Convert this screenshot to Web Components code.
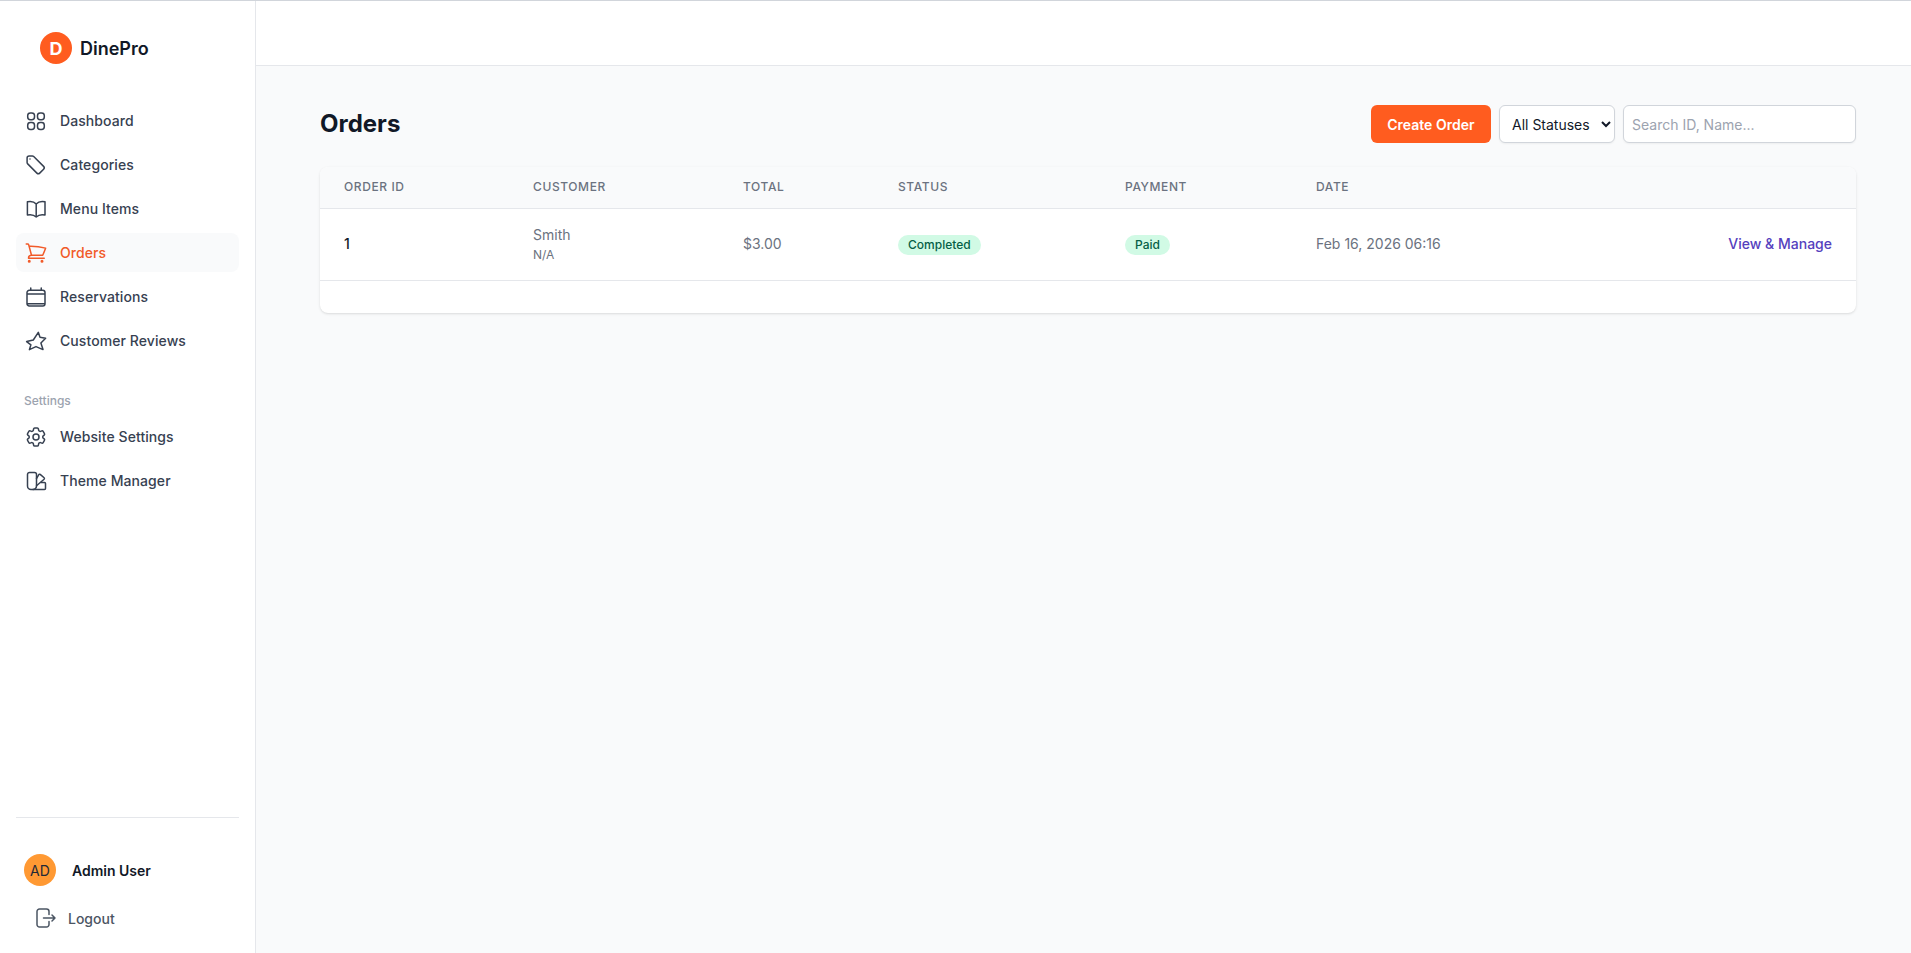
<!DOCTYPE html>
<html lang="en">
<head>
<meta charset="utf-8">
<title>Orders</title>
<style>
  html, body { margin: 0; height: 100%; }
  body { font-family: Inter, "Liberation Sans", sans-serif; background: #f9fafb; color: #111827; }
</style>
</head>
<body>
<app-shell>
  <side-bar slot="side"></side-bar>
  <orders-page></orders-page>
</app-shell>

<script>
const ICONS = {
  dashboard: '<rect x="3.7" y="3.9" width="6.8" height="6.8" rx="2.7"/><rect x="13.5" y="3.9" width="6.8" height="6.8" rx="2.7"/><rect x="3.7" y="13.6" width="6.8" height="6.8" rx="2.7"/><rect x="13.5" y="13.6" width="6.8" height="6.8" rx="2.7"/>',
  tag: '<path d="M5.2 2.9h3.1c.5 0 1 .2 1.4.6l9.9 9.9c.8.8.8 2 0 2.8l-3.9 3.9c-.8.8-2 .8-2.8 0l-9.2-9.2a2 2 0 0 1-.6-1.4V4.9c0-1.1.9-2 2.1-2Z"/><path d="M6 6h.01"/>',
  book: '<path d="M12.2 7C10.7 5.3 8.7 4.5 6.2 4.5c-1 0-2 .1-2.8.3V18c.8-.2 1.8-.3 2.8-.3 2.5 0 4.5.8 6 2.3M12.2 7c1.5-1.7 3.5-2.5 6-2.5 1 0 2 .1 2.8.3V18c-.8-.2-1.8-.3-2.8-.3-2.5 0-4.5.8-6 2.3M12.2 7v13"/>',
  cart: '<path d="M2.25 3h1.386c.51 0 .955.343 1.087.835l.383 1.437M7.5 14.25a3 3 0 0 0-3 3h15.75m-12.75-3h11.218c1.121-2.3 2.1-4.684 2.924-7.138a60.114 60.114 0 0 0-16.536-1.84M7.5 14.25 5.106 5.272M6 20.25a.75.75 0 1 1-1.5 0 .75.75 0 0 1 1.5 0Zm12.75 0a.75.75 0 1 1-1.5 0 .75.75 0 0 1 1.5 0Z"/>',
  calendar: '<path d="M6.75 3v2.25M17.25 3v2.25M3 18.75V7.5a2.25 2.25 0 0 1 2.25-2.25h13.5A2.25 2.25 0 0 1 21 7.5v11.25m-18 0A2.25 2.25 0 0 0 5.25 21h13.5A2.25 2.25 0 0 0 21 18.75m-18 0h18M3 9h18"/>',
  star: '<path d="M14.3 3.3 16 8.3l5.6 1-4.7 4.7 2.1 6.6-7-3-6.6 3 1.5-4.8-4.3-3.2 6.7-1.6Z"/>',
  cog: '<path d="M9.594 3.94c.09-.542.56-.94 1.11-.94h2.593c.55 0 1.02.398 1.11.94l.213 1.281c.063.374.313.686.645.87.074.04.147.083.22.127.325.196.72.257 1.075.124l1.217-.456a1.125 1.125 0 0 1 1.37.49l1.296 2.247a1.125 1.125 0 0 1-.26 1.431l-1.003.827c-.293.241-.438.613-.43.992a7.723 7.723 0 0 1 0 .255c-.008.378.137.75.43.991l1.004.827c.424.35.534.955.26 1.43l-1.298 2.247a1.125 1.125 0 0 1-1.369.491l-1.217-.456c-.355-.133-.75-.072-1.076.124a6.47 6.47 0 0 1-.22.128c-.331.183-.581.495-.644.869l-.213 1.281c-.09.543-.56.94-1.11.94h-2.594c-.55 0-1.019-.398-1.11-.94l-.213-1.281c-.062-.374-.312-.686-.644-.87a6.52 6.52 0 0 1-.22-.127c-.325-.196-.72-.257-1.076-.124l-1.217.456a1.125 1.125 0 0 1-1.369-.49l-1.297-2.247a1.125 1.125 0 0 1 .26-1.431l1.004-.827c.292-.24.437-.613.43-.991a6.932 6.932 0 0 1 0-.255c.007-.38-.138-.751-.43-.992l-1.004-.827a1.125 1.125 0 0 1-.26-1.43l1.297-2.247a1.125 1.125 0 0 1 1.37-.491l1.216.456c.356.133.751.072 1.076-.124.072-.044.146-.086.22-.128.332-.183.582-.495.644-.869l.214-1.28Z"/><path d="M15 12a3 3 0 1 1-6 0 3 3 0 0 1 6 0Z"/>',
  swatch: '<path d="M3.5 5.5a2 2 0 0 1 2-2h5a2 2 0 0 1 2 2V17a3.5 3.5 0 0 1-3.5 3.5H7A3.5 3.5 0 0 1 3.5 17Z"/><path d="m12.5 9.5 2.3-3.8a1 1 0 0 1 1.4-.3l3.9 3.4a1 1 0 0 1 0 1.4l-7.6 6.6"/><path d="M17 13.5h3.5a1 1 0 0 1 1 1v5a1 1 0 0 1-1 1H9"/>',
  logout: '<path d="M15 8.5v-3A2.5 2.5 0 0 0 12.5 3h-7A2.5 2.5 0 0 0 3 5.5v13A2.5 2.5 0 0 0 5.5 21h7a2.5 2.5 0 0 0 2.5-2.5v-3M9.5 12H21m-3-3 3 3-3 3"/>'
};

function icon(name) {
  return `<svg viewBox="0 0 24 24" fill="none" stroke="currentColor" stroke-width="1.5" stroke-linecap="round" stroke-linejoin="round" width="24" height="24">${ICONS[name]}</svg>`;
}

window.customElements.define('app-shell',
class extends HTMLElement {
  constructor(){super();
    this.attachShadow({mode:'open'});
    this.shadowRoot.innerHTML = `
    <style>
      :host { display:flex; height:953px; box-sizing:border-box; border-top:1px solid #d1d5db; overflow:hidden; }
      .main { flex:1; min-width:0; display:flex; flex-direction:column; }
      .top { height:64px; flex:none; background:#fff; border-bottom:1px solid #e5e7eb; }
    </style>
    <slot name="side"></slot>
    <div class="main">
      <div class="top"></div>
      <slot></slot>
    </div>
    `;
  }
});

window.customElements.define('nav-item',
class extends HTMLElement {
  constructor(){super();
    this.attachShadow({mode:'open'});
    this.shadowRoot.innerHTML = `
    <style>
      :host { display:flex; align-items:center; gap:12px; height:39px; padding:0 8px; border-radius:8px;
        font-size:14px; font-weight:500; letter-spacing:.08px; color:#374151; }
      :host([active]) { background:#f9fafb; color:#f15a29; }
      svg { flex:none; display:block; }
    </style>
    ${icon(this.getAttribute('icon'))}
    <slot></slot>
    `;
  }
});

window.customElements.define('side-bar',
class extends HTMLElement {
  constructor(){super();
    this.attachShadow({mode:'open'});
    this.shadowRoot.innerHTML = `
    <style>
      :host { display:flex; flex-direction:column; flex:none; width:256px; box-sizing:border-box;
        background:#fff; border-right:1px solid #e5e7eb; padding:0 16px; }
      .brand { display:flex; align-items:center; gap:8px; height:32px; margin:31px 0 0 24px;
        font-size:18px; font-weight:600; color:#111827; }
      .mark { width:32px; height:32px; border-radius:50%; background:#ff5c1f; color:#fff; font-weight:700; font-size:18px;
        display:flex; align-items:center; justify-content:center; }
      nav { display:flex; flex-direction:column; gap:5px; margin-top:37px; }
      .label { font-size:12px; font-weight:500; color:#9ca3af; padding-left:8px; margin:33px 0 8px; line-height:16px; }
      .foot { margin-top:auto; border-top:1px solid #e5e7eb; padding:36px 0 23px; }
      .user { display:flex; align-items:center; gap:16px; padding-left:8px; font-size:14px; font-weight:600; color:#111827; }
      .avatar { width:32px; height:32px; border-radius:50%; background:#ff9933; color:#1f2937; font-size:14px; font-weight:400;
        display:flex; align-items:center; justify-content:center; }
      .logout { display:flex; align-items:center; gap:10px; margin:20px 0 0 18px; height:24px; font-size:14px; font-weight:500; color:#4b5563; }
      .logout svg { display:block; }
    </style>
    <div class="brand"><div class="mark">D</div>DinePro</div>
    <nav>
      <nav-item icon="dashboard">Dashboard</nav-item>
      <nav-item icon="tag">Categories</nav-item>
      <nav-item icon="book">Menu Items</nav-item>
      <nav-item icon="cart" active>Orders</nav-item>
      <nav-item icon="calendar">Reservations</nav-item>
      <nav-item icon="star">Customer Reviews</nav-item>
    </nav>
    <div class="label">Settings</div>
    <nav style="margin-top:0">
      <nav-item icon="cog">Website Settings</nav-item>
      <nav-item icon="swatch">Theme Manager</nav-item>
    </nav>
    <div class="foot">
      <div class="user"><div class="avatar">AD</div>Admin User</div>
      <div class="logout">${icon('logout')}Logout</div>
    </div>
    `;
  }
});

window.customElements.define('status-badge',
class extends HTMLElement {
  constructor(){super();
    this.attachShadow({mode:'open'});
    this.shadowRoot.innerHTML = `
    <style>
      :host { display:inline-block; padding:2px 10px; border-radius:9999px; background:#d1fae5; color:#065f46;
        font-size:12px; line-height:16px; font-weight:500; }
    </style>
    <slot></slot>
    `;
  }
});

window.customElements.define('orders-table',
class extends HTMLElement {
  constructor(){super();
    this.attachShadow({mode:'open'});
    this.shadowRoot.innerHTML = `
    <style>
      :host { display:block; background:#fff; border-radius:8px; overflow:hidden;
        box-shadow:0 1px 3px rgba(0,0,0,.1), 0 1px 2px -1px rgba(0,0,0,.1); }
      table { width:100%; border-collapse:collapse; table-layout:fixed; }
      th { height:41px; padding:0 0 1px 24px; box-sizing:border-box; background:#f9fafb; border-bottom:1px solid #e5e7eb; text-align:left;
        font-size:12px; font-weight:500; letter-spacing:.05em; text-transform:uppercase; color:#6b7280; }
      td { height:72px; padding:0 0 1px 24px; box-sizing:border-box; border-bottom:1px solid #e5e7eb; font-size:14px; color:#6b7280; }
      td.id { color:#111827; font-weight:500; }
      td.pill { padding-top:2px; padding-bottom:0; }
      td.action { text-align:right; padding:0 24px 1px 0; }
      a { color:#5540bd; font-weight:500; text-decoration:none; }
      .sub { font-size:12px; line-height:16px; margin-top:2px; }
      .name { line-height:20px; }
      .pager { height:32px; }
    </style>
    <table>
      <colgroup><col style="width:189px"><col style="width:210px"><col style="width:155px"><col style="width:227px"><col style="width:191px"><col><col style="width:240px"></colgroup>
      <thead><tr><th>Order ID</th><th>Customer</th><th>Total</th><th>Status</th><th>Payment</th><th>Date</th><th></th></tr></thead>
      <tbody><tr>
        <td class="id">1</td>
        <td><div class="name">Smith</div><div class="sub">N/A</div></td>
        <td>$3.00</td>
        <td class="pill"><status-badge>Completed</status-badge></td>
        <td class="pill"><status-badge>Paid</status-badge></td>
        <td>Feb 16, 2026 06:16</td>
        <td class="action"><a href="#">View &amp; Manage</a></td>
      </tr></tbody>
    </table>
    <div class="pager"></div>
    `;
  }
});

window.customElements.define('orders-page',
class extends HTMLElement {
  constructor(){super();
    this.attachShadow({mode:'open'});
    this.shadowRoot.innerHTML = `
    <style>
      :host { display:block; padding:39px 55px 0 64px; }
      .head { display:flex; align-items:center; justify-content:space-between; margin-bottom:24px; height:38px; }
      h1 { margin:0; font-size:24px; line-height:32px; font-weight:700; color:#111827; }
      .tools { display:flex; align-items:stretch; gap:8px; height:38px; }
      button { font:600 14px Inter, sans-serif; color:#fff; background:#ff5c1f; border:none; border-radius:6px; padding:0 16.5px; }
      select { font:14px Inter, sans-serif; color:#111827; background:#fff; border:1px solid #d1d5db; border-radius:6px; padding:0 2px 0 8px; width:116px;
        box-shadow:0 1px 2px rgba(0,0,0,.05); }
      input { font:14px Inter, sans-serif; background:#fff; border:1px solid #d1d5db; border-radius:6px; padding:0 8px; width:233px; box-sizing:border-box;
        box-shadow:0 1px 2px rgba(0,0,0,.05); }
      input::placeholder { color:#9ca3af; }
    </style>
    <div class="head">
      <h1>Orders</h1>
      <div class="tools">
        <button>Create Order</button>
        <select><option>All Statuses</option></select>
        <input placeholder="Search ID, Name...">
      </div>
    </div>
    <orders-table></orders-table>
    `;
  }
});
</script>
</body>
</html>
